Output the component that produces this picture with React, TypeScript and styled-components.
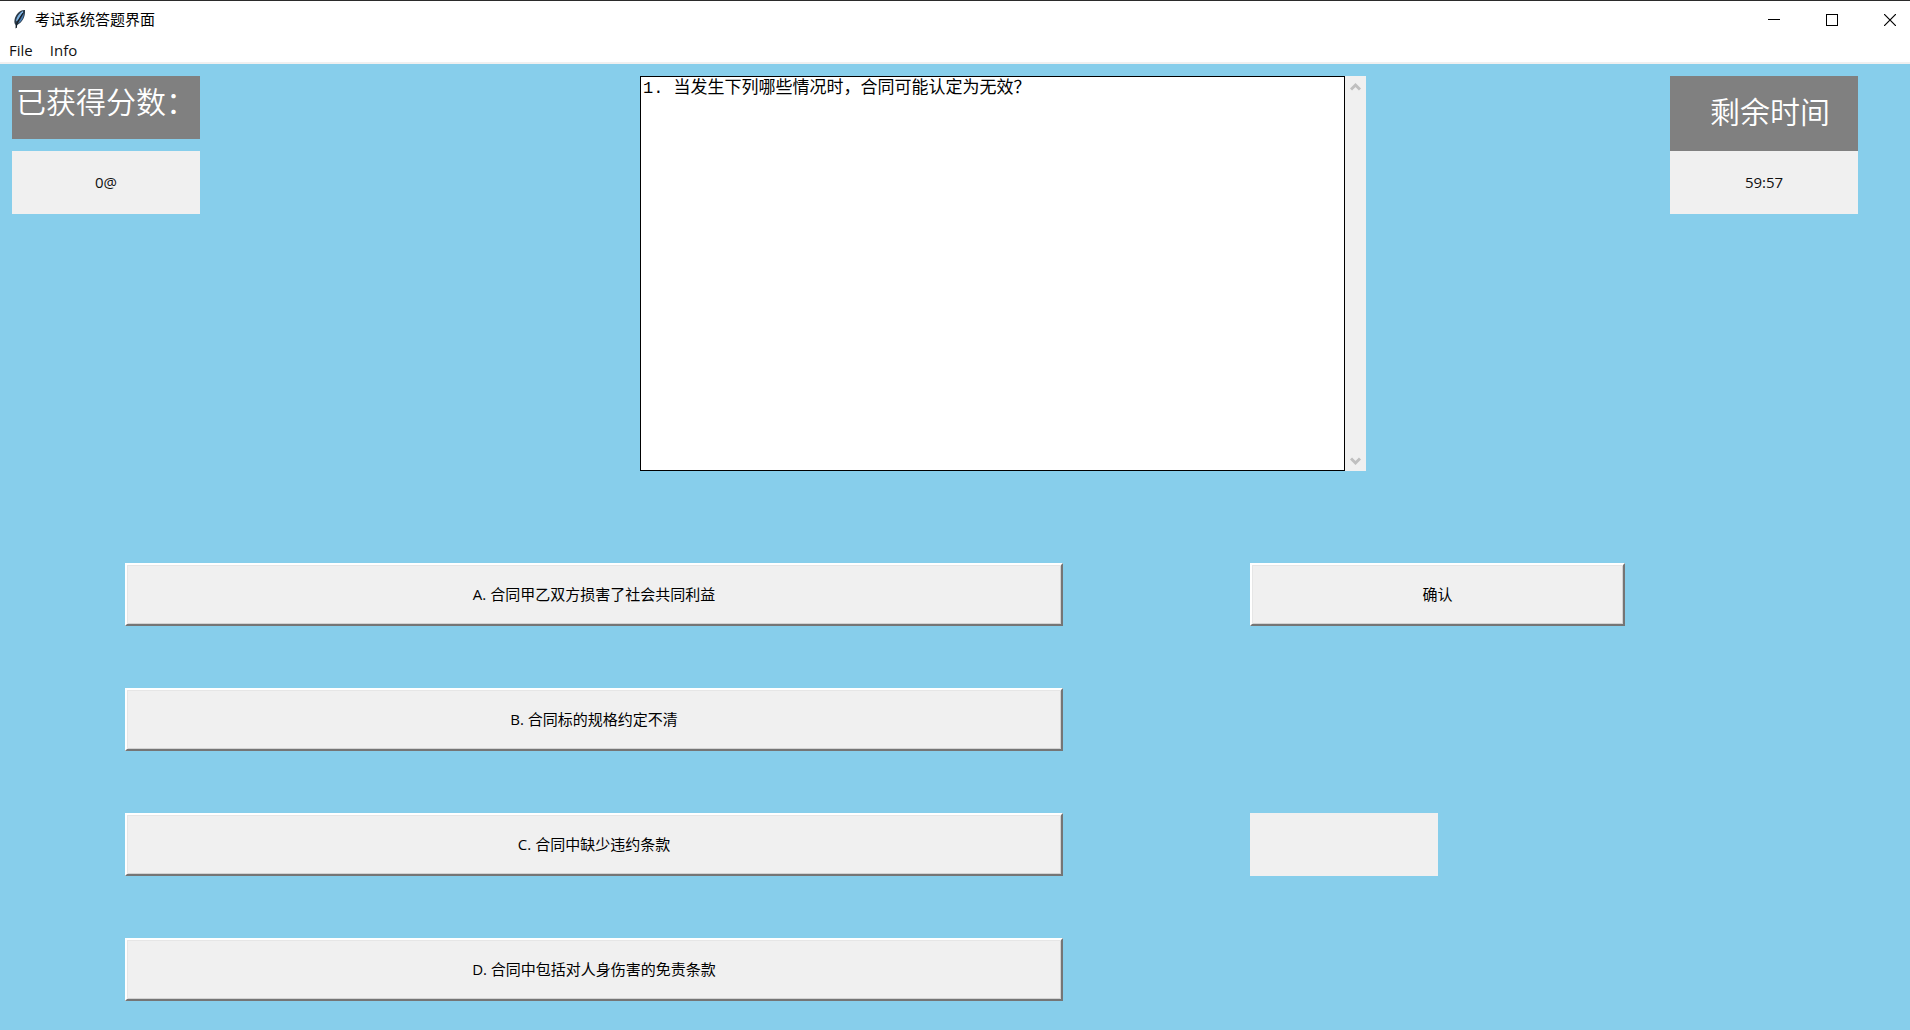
import React, { useState } from "react";
import styled, { createGlobalStyle } from "styled-components";

const uiFont = `"Open Sans", "Noto Sans CJK SC", sans-serif`;
const cjkFont = `"Noto Sans CJK SC", sans-serif`;

const GlobalStyle = createGlobalStyle`
  *, *::before, *::after { box-sizing: border-box; }
  body { margin: 0; background: #87ceeb; }
  button, textarea, output { font: inherit; color: inherit; }
`;

const Window = styled.div`
  display: flex;
  flex-direction: column;
  min-height: 100vh;
  font-family: ${uiFont};
  font-size: 15px;
  line-height: 20px;
  color: #111;
  background: #87ceeb;
`;

const TitleBar = styled.header`
  display: flex;
  align-items: center;
  height: 38px;
  padding-left: 12px;
  border-top: 1px solid #2b2b2b;
  background: #fff;
`;

const Title = styled.h1`
  flex: 1;
  margin: 0 0 0 8px;
  padding-bottom: 2px;
  font: 400 15px/20px ${cjkFont};
  color: #000;
`;

const WindowControls = styled.div`
  display: flex;
  gap: 17px;
`;

const WindowButton = styled.button`
  display: flex;
  align-items: center;
  justify-content: center;
  width: 41px;
  height: 37px;
  padding: 0;
  border: 0;
  background: transparent;
`;

const MenuBar = styled.nav`
  display: flex;
  height: 26px;
  padding-left: 9px;
  gap: 17px;
  border-bottom: 2px solid #f0f0f0;
  background: #fff;
`;

const MenuButton = styled.button`
  padding: 0;
  border: 0;
  background: transparent;
`;

const Main = styled.main`
  flex: 1;
  padding: 12px 0 29px;
`;

const TopRow = styled.section`
  display: grid;
  grid-template-columns: 188px 440fr 726px 304fr 188px;
  align-items: start;
  padding: 0 52px 0 12px;
`;

const Panel = styled.div<{ $column: number; $gap: number }>`
  grid-column: ${(p) => p.$column};
  display: flex;
  flex-direction: column;
  gap: ${(p) => p.$gap}px;
`;

const Caption = styled.label<{ $tall?: boolean }>`
  display: flex;
  justify-content: ${(p) => (p.$tall ? "flex-end" : "flex-start")};
  height: ${(p) => (p.$tall ? 75 : 63)}px;
  padding: ${(p) => (p.$tall ? "14px 28px 0" : "4px 4px 0")};
  background: #808080;
  color: #fff;
  font: 350 30px/40px ${cjkFont};
  white-space: nowrap;
`;

const Value = styled.output`
  display: flex;
  align-items: center;
  justify-content: center;
  height: 63px;
  padding-bottom: 2px;
  background: #f0f0f0;
`;

const QuestionBox = styled.div`
  grid-column: 3;
  display: flex;
  height: 395px;
`;

const Question = styled.textarea`
  flex: 1;
  min-width: 0;
  padding: 2px;
  border: 1px solid #000;
  border-radius: 0;
  outline: 0;
  resize: none;
  overflow: hidden;
  background: #fff;
  color: #000;
  font: 400 17px/20px "Liberation Mono", "Noto Sans CJK SC", monospace;
`;

const ScrollBar = styled.div`
  display: flex;
  flex-direction: column;
  justify-content: space-between;
  width: 21px;
  background: #f0f0f0;
`;

const ScrollButton = styled.button`
  display: flex;
  align-items: center;
  justify-content: center;
  height: 21px;
  padding: 0;
  border: 0;
  background: transparent;
`;

const AnswerArea = styled.section`
  display: grid;
  grid-template-columns: 938fr 187fr 375fr 285fr;
  margin-top: 92px;
  padding-left: 125px;
`;

const Options = styled.div`
  grid-column: 1;
  display: flex;
  flex-direction: column;
  gap: 62px;
`;

const Actions = styled.div`
  grid-column: 3;
  display: flex;
  flex-direction: column;
  gap: 187px;
`;

const RaisedButton = styled.button`
  height: 63px;
  padding: 0 0 2px;
  border: 2px solid;
  border-color: #fff #757575 #757575 #fff;
  background: #f0f0f0;
  box-shadow: inset 1px 1px #e6e6e6, inset -1px -1px #d2d2d2;
  color: #000;

  &:active {
    border-color: #757575 #fff #fff #757575;
  }
`;

const Feedback = styled.output`
  width: 50%;
  height: 63px;
  background: #f0f0f0;
`;

const FeatherIcon = () => (
  <svg width="15" height="21" viewBox="0 0 15 21" aria-hidden="true">
    <path d="M13 1C8 .5 3.500 5.500 2.500 11c-.4 2 .1 4 1 5l.3 4 1.400-4C10.500 13 13.500 8 13 1Z" fill="#2b3b4a" />
    <path d="M11 2C7.500 4 4.500 8 4 12.500l2-1.500 3-5 2-2Z" fill="#7db2e2" />
    <path d="M12 4 6 14.500c3.500-2 5.600-5.500 6-10.500Z" fill="#4a80b8" />
    <path d="M11 4 5 14l-.8 5" fill="none" stroke="#111820" strokeWidth="1" />
  </svg>
);

const Chevron = ({ d }: { d: string }) => (
  <svg width="11" height="10" viewBox="0 0 11 10" aria-hidden="true">
    <path d={d} fill="none" stroke="#bfbfbf" strokeWidth="3" />
  </svg>
);

const options = [
  "A. 合同甲乙双方损害了社会共同利益",
  "B. 合同标的规格约定不清",
  "C. 合同中缺少违约条款",
  "D. 合同中包括对人身伤害的免责条款",
];

export default function App() {
  const [, setSelected] = useState<string | null>(null);

  return (
    <Window>
      <GlobalStyle />
      <TitleBar>
        <FeatherIcon />
        <Title>考试系统答题界面</Title>
        <WindowControls>
          <WindowButton aria-label="最小化">
            <svg width="12" height="12" shapeRendering="crispEdges">
              <path d="M0 5.500h12" stroke="#000" />
            </svg>
          </WindowButton>
          <WindowButton aria-label="最大化">
            <svg width="12" height="12" shapeRendering="crispEdges">
              <rect x=".5" y=".5" width="11" height="11" fill="none" stroke="#000" />
            </svg>
          </WindowButton>
          <WindowButton aria-label="关闭">
            <svg width="12" height="12">
              <path d="m0 0 12 12M12 0 0 12" stroke="#000" strokeWidth="1.200" />
            </svg>
          </WindowButton>
        </WindowControls>
      </TitleBar>
      <MenuBar>
        <MenuButton>File</MenuButton>
        <MenuButton>Info</MenuButton>
      </MenuBar>
      <Main>
        <TopRow>
          <Panel $column={1} $gap={12}>
            <Caption htmlFor="score">已获得分数：</Caption>
            <Value id="score">0@</Value>
          </Panel>
          <QuestionBox>
            <Question
              readOnly
              aria-label="题目"
              value="1. 当发生下列哪些情况时，合同可能认定为无效？"
            />
            <ScrollBar>
              <ScrollButton aria-label="向上滚动">
                <Chevron d="M1 7.500 5.500 3 10 7.500" />
              </ScrollButton>
              <ScrollButton aria-label="向下滚动">
                <Chevron d="M1 2.500 5.500 7 10 2.500" />
              </ScrollButton>
            </ScrollBar>
          </QuestionBox>
          <Panel $column={5} $gap={0}>
            <Caption $tall htmlFor="remaining">剩余时间</Caption>
            <Value id="remaining">59:57</Value>
          </Panel>
        </TopRow>
        <AnswerArea>
          <Options>
            {options.map((text) => (
              <RaisedButton key={text} onClick={() => setSelected(text)}>
                {text}
              </RaisedButton>
            ))}
          </Options>
          <Actions>
            <RaisedButton>确认</RaisedButton>
            <Feedback aria-label="答题结果" />
          </Actions>
        </AnswerArea>
      </Main>
    </Window>
  );
}
